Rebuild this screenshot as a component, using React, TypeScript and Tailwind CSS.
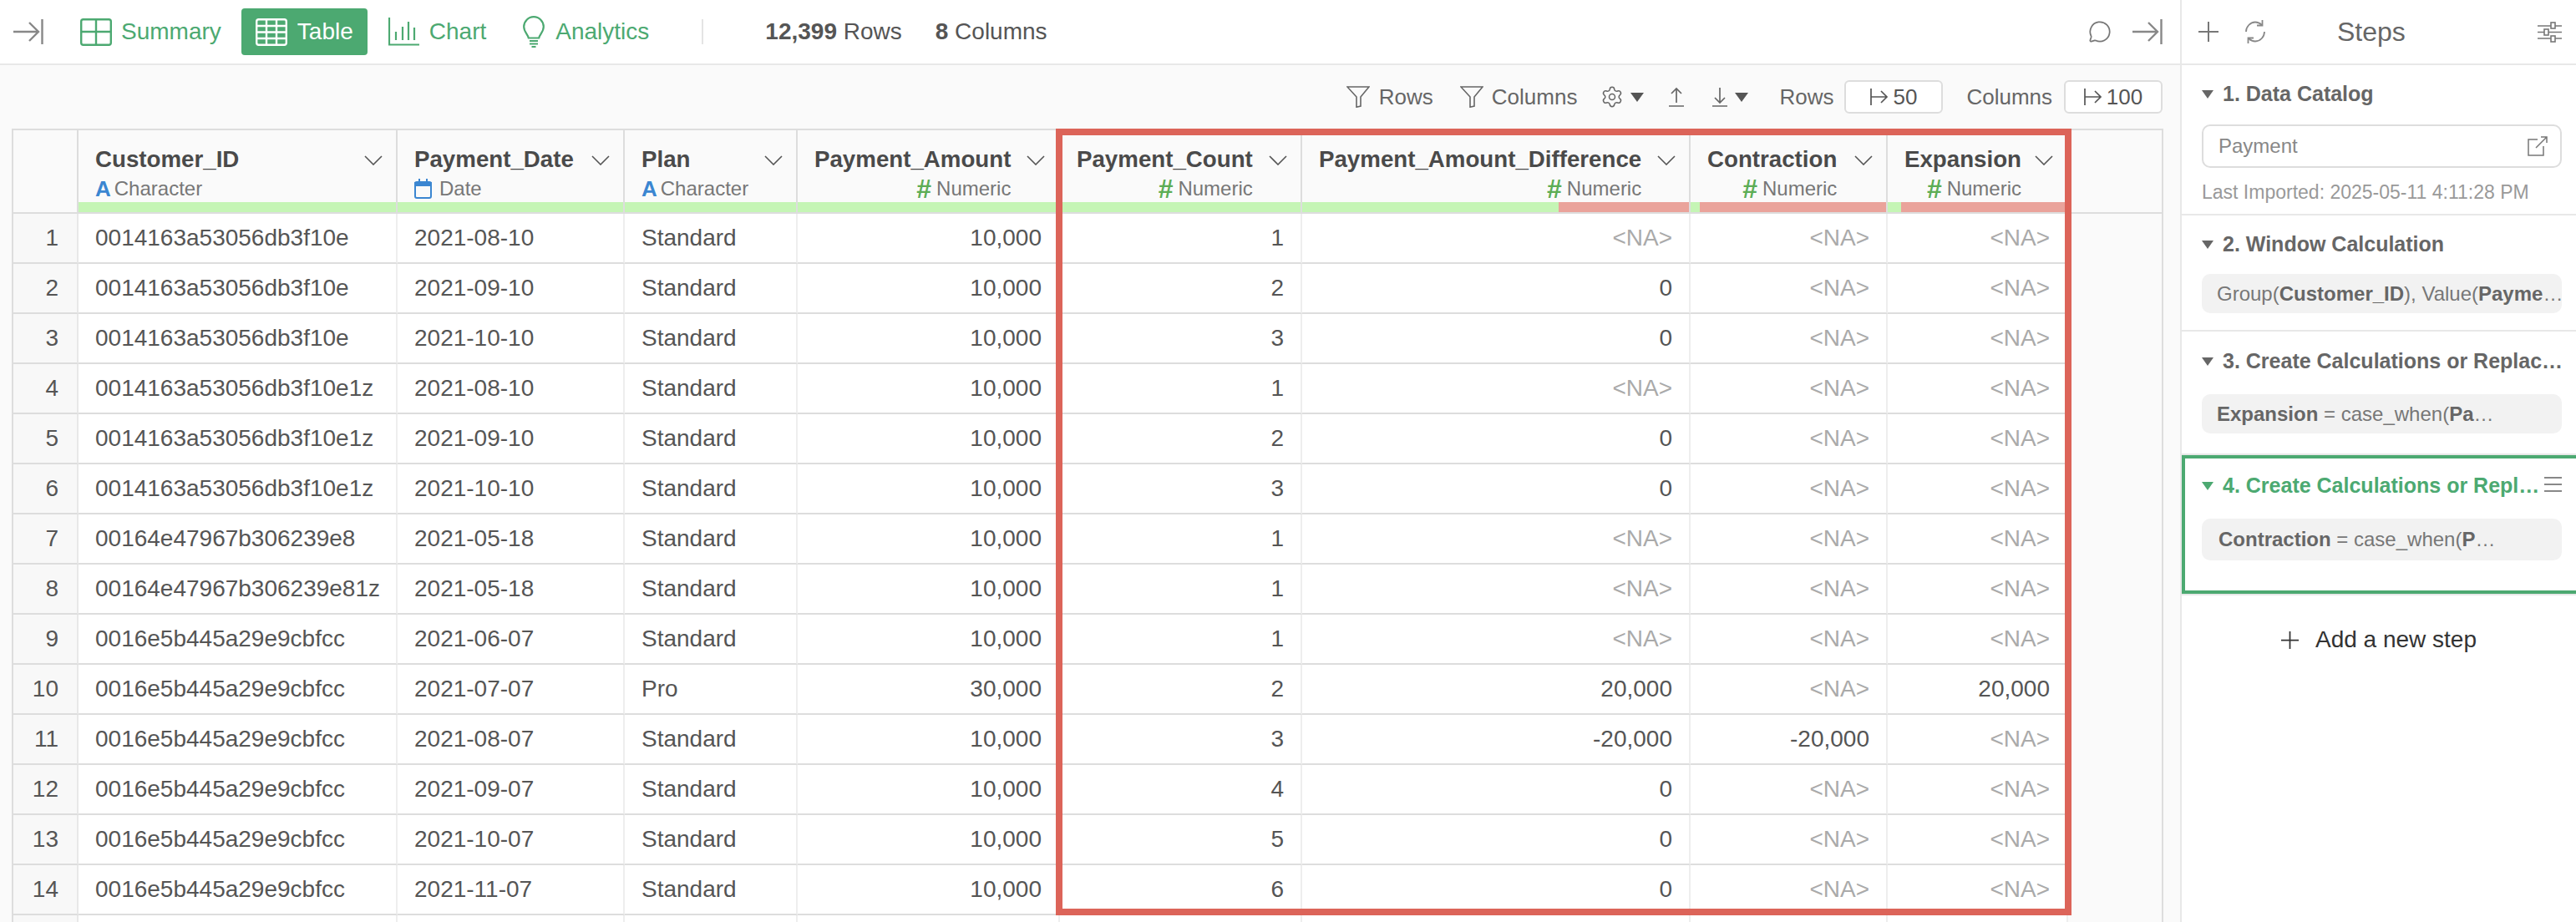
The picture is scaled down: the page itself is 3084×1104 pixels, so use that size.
import { MessageCircle, Settings } from "lucide-react";

const GREEN = "#4ca971";

type Col = {
  name: string;
  type: "char" | "date" | "num";
  bar?: string;
};

const COLS: Col[] = [
  { name: "Customer_ID", type: "char" },
  { name: "Payment_Date", type: "date" },
  { name: "Plan", type: "char" },
  { name: "Payment_Amount", type: "num" },
  { name: "Payment_Count", type: "num" },
  { name: "Payment_Amount_Difference", type: "num", bar: "w-[307px]" },
  { name: "Contraction", type: "num", bar: "w-[11px]" },
  { name: "Expansion", type: "num", bar: "w-[16px]" },
];

const ID_A = "0014163a53056db3f10e";
const ID_B = "0014163a53056db3f10e1z";
const ID_C = "00164e47967b306239e8";
const ID_D = "00164e47967b306239e81z";
const ID_E = "0016e5b445a29e9cbfcc";
const NA = "<NA>";

const ROWS = [
  [ID_A, "2021-08-10", "Standard", "10,000", "1", NA, NA, NA],
  [ID_A, "2021-09-10", "Standard", "10,000", "2", "0", NA, NA],
  [ID_A, "2021-10-10", "Standard", "10,000", "3", "0", NA, NA],
  [ID_B, "2021-08-10", "Standard", "10,000", "1", NA, NA, NA],
  [ID_B, "2021-09-10", "Standard", "10,000", "2", "0", NA, NA],
  [ID_B, "2021-10-10", "Standard", "10,000", "3", "0", NA, NA],
  [ID_C, "2021-05-18", "Standard", "10,000", "1", NA, NA, NA],
  [ID_D, "2021-05-18", "Standard", "10,000", "1", NA, NA, NA],
  [ID_E, "2021-06-07", "Standard", "10,000", "1", NA, NA, NA],
  [ID_E, "2021-07-07", "Pro", "30,000", "2", "20,000", NA, "20,000"],
  [ID_E, "2021-08-07", "Standard", "10,000", "3", "-20,000", "-20,000", NA],
  [ID_E, "2021-09-07", "Standard", "10,000", "4", "0", NA, NA],
  [ID_E, "2021-10-07", "Standard", "10,000", "5", "0", NA, NA],
  [ID_E, "2021-11-07", "Standard", "10,000", "6", "0", NA, NA],
];

const GRID =
  "grid grid-cols-[78px_382px_272px_207px_314px_290px_465px_236px_216px_1fr]";

const CollapseIcon = () => (
  <svg width="36" height="30" viewBox="0 0 36 30" fill="none" stroke="#888" strokeWidth="2.4">
    <path d="M0 15H30M19 4l11 11-11 11M34.5 0v30" />
  </svg>
);

const SummaryIcon = () => (
  <svg width="38" height="33" viewBox="0 0 38 33" fill="none" stroke={GREEN} strokeWidth="2.4">
    <rect x="1.2" y="1.2" width="35.6" height="30.6" rx="2.5" />
    <path d="M19 1v31M1 16h36" />
  </svg>
);

const TableIcon = () => (
  <svg width="38" height="33" viewBox="0 0 38 33" fill="none" stroke="#fff" strokeWidth="2.4">
    <rect x="1.2" y="1.2" width="35.6" height="30.6" rx="2.5" />
    <path d="M13 1v31M25 1v31M1 9h36M1 16.5h36M1 24h36" />
  </svg>
);

const ChartIcon = () => (
  <svg width="38" height="34" viewBox="0 0 38 34" fill="none" stroke={GREEN} strokeWidth="2.2">
    <path d="M1 0v32.5h36M9 17v10M17 11v16M24 5v22M31 12v15" />
  </svg>
);

const BulbIcon = () => (
  <svg width="26" height="38" viewBox="0 0 26 38" fill="none" stroke={GREEN} strokeWidth="2.2">
    <path d="M13 1.2C6.4 1.2 1.2 6.6 1.2 13c0 6 4.6 9 5.6 13.5h12.4c1-4.5 5.6-7.5 5.6-13.5C24.8 6.6 19.6 1.2 13 1.2Z" />
    <path d="M8 30h10M8 33.5h10M10.5 37h5" />
  </svg>
);

const FunnelIcon = () => (
  <svg width="28" height="26" viewBox="0 0 28 26" fill="none" stroke="#666" strokeWidth="1.6">
    <path d="M1 1h26L17 13v11l-5 1.2V13L1 1Z" />
  </svg>
);

const Caret = () => (
  <svg width="16" height="11" viewBox="0 0 16 11" fill="#555">
    <path d="M0 0h16L8 11Z" />
  </svg>
);

const UploadIcon = () => (
  <svg width="18" height="24" viewBox="0 0 18 24" fill="none" stroke="#666" strokeWidth="1.7">
    <path d="M9 19V2M3 8l6-6 6 6M0 23h18" />
  </svg>
);

const DownloadIcon = () => (
  <svg width="20" height="24" viewBox="0 0 20 24" fill="none" stroke="#666" strokeWidth="1.7">
    <path d="M10 1v18M4 13l6 6 6-6M1 23h18" />
  </svg>
);

const JumpIcon = () => (
  <svg width="22" height="22" viewBox="0 0 22 22" fill="none" stroke="#555" strokeWidth="1.7">
    <path d="M1 1v20M1 11h19M13 4l7 7-7 7" />
  </svg>
);

const Chevron = () => (
  <svg width="22" height="12" viewBox="0 0 22 12" fill="none" stroke="#555" strokeWidth="1.6" className="shrink-0">
    <path d="M1 1l10 10L21 1" />
  </svg>
);

const CalendarIcon = () => (
  <svg width="21" height="24" viewBox="0 0 21 24" fill="none" stroke="#3b86d1" strokeWidth="2">
    <rect x="1" y="4" width="19" height="19" rx="2" />
    <path d="M1 5h19v3H1Z" fill="#3b86d1" />
    <path d="M6 0v4M15 0v4" />
  </svg>
);

const RefreshIcon = () => (
  <svg width="28" height="28" viewBox="0 0 28 28" fill="none" stroke="#888" strokeWidth="1.8">
    <path d="M3 14C3 8 8 2.5 14 2.5c3 0 5.5 1.2 8 3.5" />
    <path d="M25 14c0 6-5 11.5-11 11.5-3 0-5.5-1.2-8-3.5" />
    <path d="M22.5 0v6.5H16M5.500 28v-6.500H12" />
  </svg>
);

const SlidersIcon = () => (
  <svg width="29" height="25" viewBox="0 0 29 25" fill="none" stroke="#777" strokeWidth="1.6">
    <path d="M0 5h29M0 12.500h29M0 20h29" />
    <rect x="16" y="1" width="5" height="7" fill="#fff" />
    <rect x="8" y="9" width="5" height="7" fill="#fff" />
    <rect x="16" y="17" width="5" height="7" fill="#fff" />
  </svg>
);

const OpenIcon = () => (
  <svg width="24" height="24" viewBox="0 0 24 24" fill="none" stroke="#777" strokeWidth="1.5">
    <path d="M12 4H1v19h18V12M10 14 23 1M16 1h7v7" />
  </svg>
);

const PlusIcon = ({ size, color }: { size: number; color: string }) => (
  <svg width={size} height={size} viewBox="0 0 24 24" fill="none" stroke={color} strokeWidth="2" className="shrink-0">
    <path d="M12 0v24M0 12h24" />
  </svg>
);

const StepCaret = ({ color = "#666" }: { color?: string }) => (
  <svg width="14" height="10" viewBox="0 0 14 10" fill={color} className="shrink-0">
    <path d="M0 0h14L7 10Z" />
  </svg>
);

const TypeLabel = ({ type }: { type: Col["type"] }) => {
  if (type === "num") {
    return (
      <div className="flex items-center gap-[6px] h-[28px] text-[24px] text-[#777]">
        <span className="font-bold text-[32px] text-[#5cad55]">#</span>
        Numeric
      </div>
    );
  }
  if (type === "date") {
    return (
      <div className="flex items-center gap-[9px] h-[28px] text-[24px] text-[#777]">
        <CalendarIcon />
        Date
      </div>
    );
  }
  return (
    <div className="flex items-center gap-[4px] h-[28px] text-[24px] text-[#777]">
      <span className="font-bold text-[26px] text-[#3b86d1]">A</span>
      Character
    </div>
  );
};

const HeaderCell = ({ col }: { col: Col }) => (
  <div className="flex flex-col h-[100px] bg-[#fafafa] border-r-2 border-b-2 border-[#ddd]">
    <div className="flex justify-between items-start flex-1 pl-[20px] pr-[16px] pt-[17px]">
      <div className={col.type === "num" ? "flex flex-col items-end" : "flex flex-col items-start"}>
        <div className="text-[27.7px] leading-[36px] font-bold text-[#4a4a4a] whitespace-nowrap">{col.name}</div>
        <div className="mt-[3px]">
          <TypeLabel type={col.type} />
        </div>
      </div>
      <div className="pt-[13px]">
        <Chevron />
      </div>
    </div>
    <div className="flex h-[12px] bg-[#eaa39b]">
      <div className={col.bar ? `${col.bar} bg-[#c5f5b5]` : "w-full bg-[#c5f5b5]"} />
    </div>
  </div>
);

const Cell = ({ value, right }: { value: string; right: boolean }) => (
  <div
    className={
      (right ? "justify-end pr-[20px] " : "pl-[20px] ") +
      "flex items-center h-[60px] border-r-2 border-r-[#eee] border-b-2 border-b-[#ddd] text-[28px] " +
      (value === NA ? "text-[#aaa]" : "text-[#555]")
    }
  >
    {value}
  </div>
);

const DataTable = () => (
  <div className="relative w-[2576px] border-t-2 border-x-2 border-[#ddd] bg-white">
    <div className={GRID}>
      <div className="h-[100px] bg-[#fafafa] border-r-2 border-b-2 border-[#ddd]" />
      {COLS.map((col) => (
        <HeaderCell key={col.name} col={col} />
      ))}
      <div className="h-[100px] bg-[#fafafa] border-b-2 border-[#ddd]" />
    </div>
    {ROWS.map((row, i) => (
      <div key={i} className={GRID}>
        <div className="flex items-center justify-end pr-[22px] h-[60px] bg-[#f8f8f8] border-r-2 border-r-[#e8e8e8] border-b-2 border-b-[#ddd] text-[28px] text-[#555]">
          {i + 1}
        </div>
        {row.map((value, j) => (
          <Cell key={j} value={value} right={j >= 3} />
        ))}
        <div className="h-[60px] bg-[#fafafa]" />
      </div>
    ))}
    <div className={GRID}>
      <div className="h-[10px] bg-[#f8f8f8] border-r-2 border-[#e8e8e8]" />
      {COLS.map((col) => (
        <div key={col.name} className="h-[10px] border-r-2 border-[#eee]" />
      ))}
      <div className="h-[10px] bg-[#fafafa]" />
    </div>
    {/* highlight around the new columns */}
    <div className="absolute top-[-2px] left-[1248px] w-[1216px] h-[942px] border-8 border-[#dc6459] pointer-events-none" />
  </div>
);

const TopBar = () => (
  <div className="flex items-center h-[78px] pl-[16px] pr-[21px] border-b-2 border-[#e8e8e8] text-[28px]">
    <CollapseIcon />
    <div className="flex items-center gap-[11px] ml-[44px] text-[#4ca971]">
      <SummaryIcon />
      <span>Summary</span>
    </div>
    <div className="flex items-center justify-center gap-[12px] ml-[24px] w-[151px] h-[56px] rounded-[4px] bg-[#4ca971] text-white">
      <TableIcon />
      <span>Table</span>
    </div>
    <div className="flex items-center gap-[11px] ml-[25px] text-[#4ca971]">
      <ChartIcon />
      <span>Chart</span>
    </div>
    <div className="flex items-center gap-[13px] ml-[44px] text-[#4ca971]">
      <BulbIcon />
      <span>Analytics</span>
    </div>
    <div className="w-[2px] h-[30px] ml-[63px] bg-[#e4e4e4]" />
    <div className="ml-[74px] text-[#555]">
      <span className="font-bold">12,399</span> Rows
    </div>
    <div className="ml-[40px] text-[#555]">
      <span className="font-bold">8</span> Columns
    </div>
    <MessageCircle size={28} strokeWidth={1.5} color="#777" className="ml-auto mr-[25px]" />
    <CollapseIcon />
  </div>
);

const TableTools = () => (
  <div className="flex items-center justify-end h-[76px] pr-[21px] bg-[#fafafa] text-[26px] text-[#666]">
    <FunnelIcon />
    <span className="ml-[11px]">Rows</span>
    <div className="ml-[32px]">
      <FunnelIcon />
    </div>
    <span className="ml-[10px]">Columns</span>
    <Settings size={28} strokeWidth={1.3} color="#666" className="ml-[28px]" />
    <div className="ml-[8px]">
      <Caret />
    </div>
    <div className="ml-[30px]">
      <UploadIcon />
    </div>
    <div className="ml-[33px]">
      <DownloadIcon />
    </div>
    <div className="ml-[8px]">
      <Caret />
    </div>
    <span className="ml-[37px]">Rows</span>
    <div className="flex items-center justify-center gap-[5px] ml-[13px] w-[118px] h-[40px] rounded-[6px] border-2 border-[#ddd] bg-white text-[#555]">
      <JumpIcon />
      50
    </div>
    <span className="ml-[28px]">Columns</span>
    <div className="flex items-center justify-center gap-[5px] ml-[14px] w-[118px] h-[40px] rounded-[6px] border-2 border-[#ddd] bg-white text-[#555]">
      <JumpIcon />
      100
    </div>
  </div>
);

const StepTitle = ({ children, color = "text-[#666]" }: { children: React.ReactNode; color?: string }) => (
  <div className={`flex items-center gap-[11px] h-[30px] text-[25px] font-bold whitespace-nowrap ${color}`}>
    {children}
  </div>
);

const Chip = ({ children, tall }: { children: React.ReactNode; tall?: boolean }) => (
  <div
    className={
      (tall ? "h-[50px] pl-[20px] " : "h-[47px] pl-[18px] ") +
      "flex items-center w-[431px] rounded-[10px] bg-[#f2f2f2] text-[24px] text-[#777] whitespace-pre overflow-hidden"
    }
  >
    {children}
  </div>
);

const StepsPanel = () => (
  <div className="w-[474px] h-[1104px] bg-white border-l-2 border-[#e8e8e8] shrink-0">
    <div className="flex items-center h-[78px] border-b-2 border-[#e8e8e8] pl-[20px] pr-[17px]">
      <PlusIcon size={24} color="#777" />
      <div className="ml-[30px]">
        <RefreshIcon />
      </div>
      <div className="ml-[84px] text-[32px] text-[#666]">Steps</div>
      <div className="ml-auto">
        <SlidersIcon />
      </div>
    </div>

    <div className="pl-[24px] pt-[20px] pb-[11px] border-b-2 border-[#e8e8e8]">
      <StepTitle>
        <StepCaret />
        1. Data Catalog
      </StepTitle>
      <div className="flex items-center justify-between mt-[21px] w-[431px] h-[52px] pl-[18px] pr-[15px] rounded-[10px] border-2 border-[#ddd] text-[24px] text-[#888]">
        Payment
        <OpenIcon />
      </div>
      <div className="mt-[14px] h-[30px] text-[23px] leading-[30px] text-[#999]">
        Last Imported: 2025-05-11 4:11:28 PM
      </div>
    </div>

    <div className="pl-[24px] pt-[20px] pb-[20px] border-b-2 border-[#e8e8e8]">
      <StepTitle>
        <StepCaret />
        2. Window Calculation
      </StepTitle>
      <div className="mt-[20px]">
        <Chip>
          Group(<b className="text-[#666]">Customer_ID</b>), Value(<b className="text-[#666]">Payme</b>…
        </Chip>
      </div>
    </div>

    <div className="pl-[24px] pt-[21px] pb-[24px] border-b-2 border-[#e8e8e8]">
      <StepTitle>
        <StepCaret />
        3. Create Calculations or Replac…
      </StepTitle>
      <div className="mt-[24px]">
        <Chip>
          <b className="text-[#666]">Expansion</b> = case_when(<b className="text-[#666]">Pa</b>…
        </Chip>
      </div>
    </div>

    <div className="relative pl-[20px] pt-[18px] pb-[36px] border-y-4 border-l-4 border-[#4ca971]">
      <StepTitle color="text-[#4ca971]">
        <StepCaret color="#4ca971" />
        4. Create Calculations or Repl…
      </StepTitle>
      <div className="absolute top-[22px] right-[17px] flex flex-col gap-[6px]">
        <div className="w-[21px] h-[2px] bg-[#888]" />
        <div className="w-[21px] h-[2px] bg-[#888]" />
        <div className="w-[21px] h-[2px] bg-[#888]" />
      </div>
      <div className="mt-[24px]">
        <Chip tall>
          <b className="text-[#666]">Contraction</b> = case_when(<b className="text-[#666]">P</b>…
        </Chip>
      </div>
    </div>
    <div className="h-[2px] bg-[#e8e8e8]" />

    <div className="flex items-center justify-center gap-[20px] mt-[35px] h-[36px] text-[28px] text-[#333]">
      <PlusIcon size={21} color="#333" />
      Add a new step
    </div>
  </div>
);

export default function App() {
  return (
    <div className="flex w-[3084px] h-[1104px] overflow-hidden bg-white font-['Liberation_Sans',Arial,sans-serif]">
      <div className="flex flex-col w-[2610px] shrink-0">
        <TopBar />
        <TableTools />
        <div className="flex-1 pl-[14px] bg-[#fafafa] overflow-hidden">
          <DataTable />
        </div>
      </div>
      <StepsPanel />
    </div>
  );
}
